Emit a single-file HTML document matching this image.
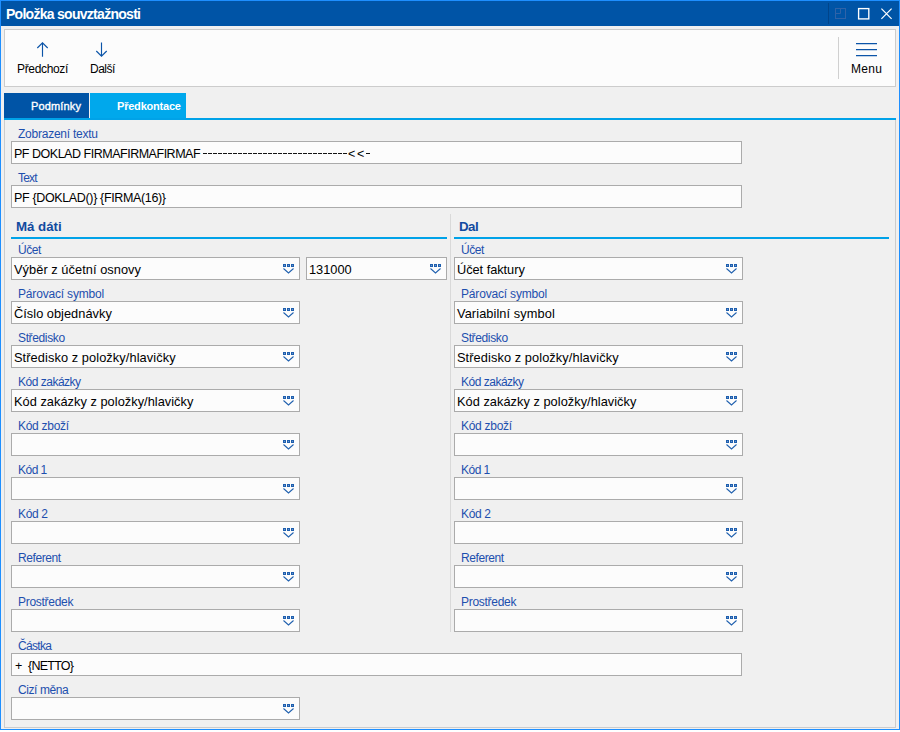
<!DOCTYPE html>
<html><head><meta charset="utf-8"><style>
html,body{margin:0;padding:0;background:#fff;width:900px;height:732px;overflow:hidden;}
body{position:relative;font-family:"Liberation Sans", sans-serif;}
.t{position:absolute;white-space:pre;}
</style></head><body>
<div style="position:absolute;left:0px;top:0px;width:898px;height:728px;border:1px solid #1e8fff;background:#f0f0f0"></div>
<div style="position:absolute;left:1px;top:1px;width:898px;height:25px;background:#0054a6"></div>
<div class="t" style="left:6px;top:7px;font-size:14px;line-height:14px;font-weight:bold;color:#fff;letter-spacing:-0.719px;">Položka souvztažnosti</div>
<div style="position:absolute;left:828px;top:3px;width:1px;height:21px;background:#00448a"></div>
<div style="position:absolute;left:4px;top:29px;width:890px;height:56px;border:1px solid #cccccc;background:#fcfcfc"></div>
<div style="position:absolute;left:4px;top:93px;width:85px;height:25px;background:#0054a6"></div>
<div style="position:absolute;left:90px;top:93px;width:96px;height:25px;background:#00a8ec"></div>
<div style="position:absolute;left:4px;top:118px;width:892px;height:2px;background:#00a2e8"></div>
<div class="t" style="left:31px;top:101px;font-size:11px;line-height:11px;font-weight:normal;color:#fff;letter-spacing:0.158px;-webkit-text-stroke:0.35px #fff;">Podmínky</div>
<div class="t" style="left:117px;top:101px;font-size:11px;line-height:11px;font-weight:bold;color:#fff;letter-spacing:-0.206px;">Předkontace</div>
<div style="position:absolute;left:4px;top:120px;width:890px;height:607px;border:1px solid #cccccc;border-top:none;background:#f0f0f0"></div>
<div class="t" style="left:18px;top:128px;font-size:12px;line-height:12px;font-weight:normal;color:#1d4fae;letter-spacing:-0.243px;">Zobrazení textu</div>
<div style="position:absolute;left:11px;top:141px;width:729px;height:21px;border:1px solid #ababab;background:#fcfcfc"></div>
<div class="t" style="left:14px;top:148px;font-size:12.5px;line-height:12.5px;font-weight:normal;color:#000;letter-spacing:-0.481px;">PF DOKLAD FIRMAFIRMAFIRMAF</div>
<div style="position:absolute;left:203px;top:153px;width:144px;height:1px;background:repeating-linear-gradient(to right,#111 0 4px,transparent 4px 5px)"></div>
<div class="t" style="left:348px;top:148px;font-size:12.5px;line-height:12.5px;font-weight:normal;color:#000;">&lt;</div>
<div class="t" style="left:357px;top:148px;font-size:12.5px;line-height:12.5px;font-weight:normal;color:#000;">&lt;</div>
<div style="position:absolute;left:366px;top:153px;width:4px;height:1px;background:#111"></div>
<div class="t" style="left:18px;top:172px;font-size:12px;line-height:12px;font-weight:normal;color:#1d4fae;letter-spacing:-0.840px;">Text</div>
<div style="position:absolute;left:11px;top:185px;width:729px;height:21px;border:1px solid #ababab;background:#fcfcfc"></div>
<div class="t" style="left:14px;top:192px;font-size:12.5px;line-height:12.5px;font-weight:normal;color:#000;letter-spacing:-0.352px;">PF {DOKLAD()} {FIRMA(16)}</div>
<div class="t" style="left:16px;top:220px;font-size:13.3px;line-height:13.3px;font-weight:bold;color:#124a9f;letter-spacing:-0.020px;">Má dáti</div>
<div style="position:absolute;left:11px;top:237px;width:436px;height:2px;background:#00a2e8"></div>
<div class="t" style="left:459px;top:220px;font-size:13.3px;line-height:13.3px;font-weight:bold;color:#124a9f;letter-spacing:-0.491px;">Dal</div>
<div style="position:absolute;left:454px;top:237px;width:435px;height:2px;background:#00a2e8"></div>
<div style="position:absolute;left:450px;top:214px;width:1px;height:418px;background:#d9d9d9"></div>
<div class="t" style="left:18px;top:244px;font-size:12px;line-height:12px;font-weight:normal;color:#1d4fae;letter-spacing:-0.453px;">Účet</div>
<div style="position:absolute;left:11px;top:257px;width:287px;height:21px;border:1px solid #ababab;background:#fcfcfc"></div>
<div class="t" style="left:14px;top:264px;font-size:12.8px;line-height:12.8px;font-weight:normal;color:#000;letter-spacing:0.052px;">Výběr z účetní osnovy</div>
<svg style="position:absolute;left:283px;top:264px" width="11" height="10" viewBox="0 0 11 10"><rect x="0.5" y="0.5" width="2" height="2" fill="#6a95d0" stroke="#1e5fae"/><rect x="4.5" y="0.5" width="2" height="2" fill="#6a95d0" stroke="#1e5fae"/><rect x="8.5" y="0.5" width="2" height="2" fill="#6a95d0" stroke="#1e5fae"/><path d="M0.5 4.5 L5.5 9 L10.5 4.5" fill="none" stroke="#1e5fae" stroke-width="1.05"/></svg>
<div style="position:absolute;left:306px;top:257px;width:139px;height:21px;border:1px solid #ababab;background:#fcfcfc"></div>
<div class="t" style="left:309px;top:264px;font-size:12.8px;line-height:12.8px;font-weight:normal;color:#000;">131000</div>
<svg style="position:absolute;left:430px;top:264px" width="11" height="10" viewBox="0 0 11 10"><rect x="0.5" y="0.5" width="2" height="2" fill="#6a95d0" stroke="#1e5fae"/><rect x="4.5" y="0.5" width="2" height="2" fill="#6a95d0" stroke="#1e5fae"/><rect x="8.5" y="0.5" width="2" height="2" fill="#6a95d0" stroke="#1e5fae"/><path d="M0.5 4.5 L5.5 9 L10.5 4.5" fill="none" stroke="#1e5fae" stroke-width="1.05"/></svg>
<div class="t" style="left:461px;top:244px;font-size:12px;line-height:12px;font-weight:normal;color:#1d4fae;letter-spacing:-0.453px;">Účet</div>
<div style="position:absolute;left:454px;top:257px;width:287px;height:21px;border:1px solid #ababab;background:#fcfcfc"></div>
<div class="t" style="left:457px;top:264px;font-size:12.8px;line-height:12.8px;font-weight:normal;color:#000;letter-spacing:-0.044px;">Účet faktury</div>
<svg style="position:absolute;left:726px;top:264px" width="11" height="10" viewBox="0 0 11 10"><rect x="0.5" y="0.5" width="2" height="2" fill="#6a95d0" stroke="#1e5fae"/><rect x="4.5" y="0.5" width="2" height="2" fill="#6a95d0" stroke="#1e5fae"/><rect x="8.5" y="0.5" width="2" height="2" fill="#6a95d0" stroke="#1e5fae"/><path d="M0.5 4.5 L5.5 9 L10.5 4.5" fill="none" stroke="#1e5fae" stroke-width="1.05"/></svg>
<div class="t" style="left:18px;top:288px;font-size:12px;line-height:12px;font-weight:normal;color:#1d4fae;letter-spacing:-0.177px;">Párovací symbol</div>
<div style="position:absolute;left:11px;top:301px;width:287px;height:21px;border:1px solid #ababab;background:#fcfcfc"></div>
<div class="t" style="left:14px;top:308px;font-size:12.8px;line-height:12.8px;font-weight:normal;color:#000;letter-spacing:0.022px;">Číslo objednávky</div>
<svg style="position:absolute;left:283px;top:308px" width="11" height="10" viewBox="0 0 11 10"><rect x="0.5" y="0.5" width="2" height="2" fill="#6a95d0" stroke="#1e5fae"/><rect x="4.5" y="0.5" width="2" height="2" fill="#6a95d0" stroke="#1e5fae"/><rect x="8.5" y="0.5" width="2" height="2" fill="#6a95d0" stroke="#1e5fae"/><path d="M0.5 4.5 L5.5 9 L10.5 4.5" fill="none" stroke="#1e5fae" stroke-width="1.05"/></svg>
<div class="t" style="left:461px;top:288px;font-size:12px;line-height:12px;font-weight:normal;color:#1d4fae;letter-spacing:-0.177px;">Párovací symbol</div>
<div style="position:absolute;left:454px;top:301px;width:287px;height:21px;border:1px solid #ababab;background:#fcfcfc"></div>
<div class="t" style="left:457px;top:308px;font-size:12.8px;line-height:12.8px;font-weight:normal;color:#000;letter-spacing:0.080px;">Variabilní symbol</div>
<svg style="position:absolute;left:726px;top:308px" width="11" height="10" viewBox="0 0 11 10"><rect x="0.5" y="0.5" width="2" height="2" fill="#6a95d0" stroke="#1e5fae"/><rect x="4.5" y="0.5" width="2" height="2" fill="#6a95d0" stroke="#1e5fae"/><rect x="8.5" y="0.5" width="2" height="2" fill="#6a95d0" stroke="#1e5fae"/><path d="M0.5 4.5 L5.5 9 L10.5 4.5" fill="none" stroke="#1e5fae" stroke-width="1.05"/></svg>
<div class="t" style="left:18px;top:332px;font-size:12px;line-height:12px;font-weight:normal;color:#1d4fae;letter-spacing:-0.367px;">Středisko</div>
<div style="position:absolute;left:11px;top:345px;width:287px;height:21px;border:1px solid #ababab;background:#fcfcfc"></div>
<div class="t" style="left:14px;top:352px;font-size:12.8px;line-height:12.8px;font-weight:normal;color:#000;letter-spacing:0.083px;">Středisko z položky/hlavičky</div>
<svg style="position:absolute;left:283px;top:352px" width="11" height="10" viewBox="0 0 11 10"><rect x="0.5" y="0.5" width="2" height="2" fill="#6a95d0" stroke="#1e5fae"/><rect x="4.5" y="0.5" width="2" height="2" fill="#6a95d0" stroke="#1e5fae"/><rect x="8.5" y="0.5" width="2" height="2" fill="#6a95d0" stroke="#1e5fae"/><path d="M0.5 4.5 L5.5 9 L10.5 4.5" fill="none" stroke="#1e5fae" stroke-width="1.05"/></svg>
<div class="t" style="left:461px;top:332px;font-size:12px;line-height:12px;font-weight:normal;color:#1d4fae;letter-spacing:-0.367px;">Středisko</div>
<div style="position:absolute;left:454px;top:345px;width:287px;height:21px;border:1px solid #ababab;background:#fcfcfc"></div>
<div class="t" style="left:457px;top:352px;font-size:12.8px;line-height:12.8px;font-weight:normal;color:#000;letter-spacing:0.083px;">Středisko z položky/hlavičky</div>
<svg style="position:absolute;left:726px;top:352px" width="11" height="10" viewBox="0 0 11 10"><rect x="0.5" y="0.5" width="2" height="2" fill="#6a95d0" stroke="#1e5fae"/><rect x="4.5" y="0.5" width="2" height="2" fill="#6a95d0" stroke="#1e5fae"/><rect x="8.5" y="0.5" width="2" height="2" fill="#6a95d0" stroke="#1e5fae"/><path d="M0.5 4.5 L5.5 9 L10.5 4.5" fill="none" stroke="#1e5fae" stroke-width="1.05"/></svg>
<div class="t" style="left:18px;top:376px;font-size:12px;line-height:12px;font-weight:normal;color:#1d4fae;letter-spacing:-0.494px;">Kód zakázky</div>
<div style="position:absolute;left:11px;top:389px;width:287px;height:21px;border:1px solid #ababab;background:#fcfcfc"></div>
<div class="t" style="left:14px;top:396px;font-size:12.8px;line-height:12.8px;font-weight:normal;color:#000;letter-spacing:0.029px;">Kód zakázky z položky/hlavičky</div>
<svg style="position:absolute;left:283px;top:396px" width="11" height="10" viewBox="0 0 11 10"><rect x="0.5" y="0.5" width="2" height="2" fill="#6a95d0" stroke="#1e5fae"/><rect x="4.5" y="0.5" width="2" height="2" fill="#6a95d0" stroke="#1e5fae"/><rect x="8.5" y="0.5" width="2" height="2" fill="#6a95d0" stroke="#1e5fae"/><path d="M0.5 4.5 L5.5 9 L10.5 4.5" fill="none" stroke="#1e5fae" stroke-width="1.05"/></svg>
<div class="t" style="left:461px;top:376px;font-size:12px;line-height:12px;font-weight:normal;color:#1d4fae;letter-spacing:-0.494px;">Kód zakázky</div>
<div style="position:absolute;left:454px;top:389px;width:287px;height:21px;border:1px solid #ababab;background:#fcfcfc"></div>
<div class="t" style="left:457px;top:396px;font-size:12.8px;line-height:12.8px;font-weight:normal;color:#000;letter-spacing:0.029px;">Kód zakázky z položky/hlavičky</div>
<svg style="position:absolute;left:726px;top:396px" width="11" height="10" viewBox="0 0 11 10"><rect x="0.5" y="0.5" width="2" height="2" fill="#6a95d0" stroke="#1e5fae"/><rect x="4.5" y="0.5" width="2" height="2" fill="#6a95d0" stroke="#1e5fae"/><rect x="8.5" y="0.5" width="2" height="2" fill="#6a95d0" stroke="#1e5fae"/><path d="M0.5 4.5 L5.5 9 L10.5 4.5" fill="none" stroke="#1e5fae" stroke-width="1.05"/></svg>
<div class="t" style="left:18px;top:420px;font-size:12px;line-height:12px;font-weight:normal;color:#1d4fae;letter-spacing:-0.280px;">Kód zboží</div>
<div style="position:absolute;left:11px;top:433px;width:287px;height:21px;border:1px solid #ababab;background:#fcfcfc"></div>
<svg style="position:absolute;left:283px;top:440px" width="11" height="10" viewBox="0 0 11 10"><rect x="0.5" y="0.5" width="2" height="2" fill="#6a95d0" stroke="#1e5fae"/><rect x="4.5" y="0.5" width="2" height="2" fill="#6a95d0" stroke="#1e5fae"/><rect x="8.5" y="0.5" width="2" height="2" fill="#6a95d0" stroke="#1e5fae"/><path d="M0.5 4.5 L5.5 9 L10.5 4.5" fill="none" stroke="#1e5fae" stroke-width="1.05"/></svg>
<div class="t" style="left:461px;top:420px;font-size:12px;line-height:12px;font-weight:normal;color:#1d4fae;letter-spacing:-0.280px;">Kód zboží</div>
<div style="position:absolute;left:454px;top:433px;width:287px;height:21px;border:1px solid #ababab;background:#fcfcfc"></div>
<svg style="position:absolute;left:726px;top:440px" width="11" height="10" viewBox="0 0 11 10"><rect x="0.5" y="0.5" width="2" height="2" fill="#6a95d0" stroke="#1e5fae"/><rect x="4.5" y="0.5" width="2" height="2" fill="#6a95d0" stroke="#1e5fae"/><rect x="8.5" y="0.5" width="2" height="2" fill="#6a95d0" stroke="#1e5fae"/><path d="M0.5 4.5 L5.5 9 L10.5 4.5" fill="none" stroke="#1e5fae" stroke-width="1.05"/></svg>
<div class="t" style="left:18px;top:464px;font-size:12px;line-height:12px;font-weight:normal;color:#1d4fae;letter-spacing:-0.520px;">Kód 1</div>
<div style="position:absolute;left:11px;top:477px;width:287px;height:21px;border:1px solid #ababab;background:#fcfcfc"></div>
<svg style="position:absolute;left:283px;top:484px" width="11" height="10" viewBox="0 0 11 10"><rect x="0.5" y="0.5" width="2" height="2" fill="#6a95d0" stroke="#1e5fae"/><rect x="4.5" y="0.5" width="2" height="2" fill="#6a95d0" stroke="#1e5fae"/><rect x="8.5" y="0.5" width="2" height="2" fill="#6a95d0" stroke="#1e5fae"/><path d="M0.5 4.5 L5.5 9 L10.5 4.5" fill="none" stroke="#1e5fae" stroke-width="1.05"/></svg>
<div class="t" style="left:461px;top:464px;font-size:12px;line-height:12px;font-weight:normal;color:#1d4fae;letter-spacing:-0.520px;">Kód 1</div>
<div style="position:absolute;left:454px;top:477px;width:287px;height:21px;border:1px solid #ababab;background:#fcfcfc"></div>
<svg style="position:absolute;left:726px;top:484px" width="11" height="10" viewBox="0 0 11 10"><rect x="0.5" y="0.5" width="2" height="2" fill="#6a95d0" stroke="#1e5fae"/><rect x="4.5" y="0.5" width="2" height="2" fill="#6a95d0" stroke="#1e5fae"/><rect x="8.5" y="0.5" width="2" height="2" fill="#6a95d0" stroke="#1e5fae"/><path d="M0.5 4.5 L5.5 9 L10.5 4.5" fill="none" stroke="#1e5fae" stroke-width="1.05"/></svg>
<div class="t" style="left:18px;top:508px;font-size:12px;line-height:12px;font-weight:normal;color:#1d4fae;letter-spacing:-0.345px;">Kód 2</div>
<div style="position:absolute;left:11px;top:521px;width:287px;height:21px;border:1px solid #ababab;background:#fcfcfc"></div>
<svg style="position:absolute;left:283px;top:528px" width="11" height="10" viewBox="0 0 11 10"><rect x="0.5" y="0.5" width="2" height="2" fill="#6a95d0" stroke="#1e5fae"/><rect x="4.5" y="0.5" width="2" height="2" fill="#6a95d0" stroke="#1e5fae"/><rect x="8.5" y="0.5" width="2" height="2" fill="#6a95d0" stroke="#1e5fae"/><path d="M0.5 4.5 L5.5 9 L10.5 4.5" fill="none" stroke="#1e5fae" stroke-width="1.05"/></svg>
<div class="t" style="left:461px;top:508px;font-size:12px;line-height:12px;font-weight:normal;color:#1d4fae;letter-spacing:-0.345px;">Kód 2</div>
<div style="position:absolute;left:454px;top:521px;width:287px;height:21px;border:1px solid #ababab;background:#fcfcfc"></div>
<svg style="position:absolute;left:726px;top:528px" width="11" height="10" viewBox="0 0 11 10"><rect x="0.5" y="0.5" width="2" height="2" fill="#6a95d0" stroke="#1e5fae"/><rect x="4.5" y="0.5" width="2" height="2" fill="#6a95d0" stroke="#1e5fae"/><rect x="8.5" y="0.5" width="2" height="2" fill="#6a95d0" stroke="#1e5fae"/><path d="M0.5 4.5 L5.5 9 L10.5 4.5" fill="none" stroke="#1e5fae" stroke-width="1.05"/></svg>
<div class="t" style="left:18px;top:552px;font-size:12px;line-height:12px;font-weight:normal;color:#1d4fae;letter-spacing:-0.403px;">Referent</div>
<div style="position:absolute;left:11px;top:565px;width:287px;height:21px;border:1px solid #ababab;background:#fcfcfc"></div>
<svg style="position:absolute;left:283px;top:572px" width="11" height="10" viewBox="0 0 11 10"><rect x="0.5" y="0.5" width="2" height="2" fill="#6a95d0" stroke="#1e5fae"/><rect x="4.5" y="0.5" width="2" height="2" fill="#6a95d0" stroke="#1e5fae"/><rect x="8.5" y="0.5" width="2" height="2" fill="#6a95d0" stroke="#1e5fae"/><path d="M0.5 4.5 L5.5 9 L10.5 4.5" fill="none" stroke="#1e5fae" stroke-width="1.05"/></svg>
<div class="t" style="left:461px;top:552px;font-size:12px;line-height:12px;font-weight:normal;color:#1d4fae;letter-spacing:-0.403px;">Referent</div>
<div style="position:absolute;left:454px;top:565px;width:287px;height:21px;border:1px solid #ababab;background:#fcfcfc"></div>
<svg style="position:absolute;left:726px;top:572px" width="11" height="10" viewBox="0 0 11 10"><rect x="0.5" y="0.5" width="2" height="2" fill="#6a95d0" stroke="#1e5fae"/><rect x="4.5" y="0.5" width="2" height="2" fill="#6a95d0" stroke="#1e5fae"/><rect x="8.5" y="0.5" width="2" height="2" fill="#6a95d0" stroke="#1e5fae"/><path d="M0.5 4.5 L5.5 9 L10.5 4.5" fill="none" stroke="#1e5fae" stroke-width="1.05"/></svg>
<div class="t" style="left:18px;top:596px;font-size:12px;line-height:12px;font-weight:normal;color:#1d4fae;letter-spacing:-0.287px;">Prostředek</div>
<div style="position:absolute;left:11px;top:609px;width:287px;height:21px;border:1px solid #ababab;background:#fcfcfc"></div>
<svg style="position:absolute;left:283px;top:616px" width="11" height="10" viewBox="0 0 11 10"><rect x="0.5" y="0.5" width="2" height="2" fill="#6a95d0" stroke="#1e5fae"/><rect x="4.5" y="0.5" width="2" height="2" fill="#6a95d0" stroke="#1e5fae"/><rect x="8.5" y="0.5" width="2" height="2" fill="#6a95d0" stroke="#1e5fae"/><path d="M0.5 4.5 L5.5 9 L10.5 4.5" fill="none" stroke="#1e5fae" stroke-width="1.05"/></svg>
<div class="t" style="left:461px;top:596px;font-size:12px;line-height:12px;font-weight:normal;color:#1d4fae;letter-spacing:-0.287px;">Prostředek</div>
<div style="position:absolute;left:454px;top:609px;width:287px;height:21px;border:1px solid #ababab;background:#fcfcfc"></div>
<svg style="position:absolute;left:726px;top:616px" width="11" height="10" viewBox="0 0 11 10"><rect x="0.5" y="0.5" width="2" height="2" fill="#6a95d0" stroke="#1e5fae"/><rect x="4.5" y="0.5" width="2" height="2" fill="#6a95d0" stroke="#1e5fae"/><rect x="8.5" y="0.5" width="2" height="2" fill="#6a95d0" stroke="#1e5fae"/><path d="M0.5 4.5 L5.5 9 L10.5 4.5" fill="none" stroke="#1e5fae" stroke-width="1.05"/></svg>
<div class="t" style="left:18px;top:640px;font-size:12px;line-height:12px;font-weight:normal;color:#1d4fae;letter-spacing:-0.676px;">Částka</div>
<div style="position:absolute;left:11px;top:653px;width:729px;height:21px;border:1px solid #ababab;background:#fcfcfc"></div>
<div class="t" style="left:15px;top:660px;font-size:12.5px;line-height:12.5px;font-weight:normal;color:#000;">+</div>
<div class="t" style="left:28px;top:660px;font-size:12.5px;line-height:12.5px;font-weight:normal;color:#000;letter-spacing:-0.750px;">{NETTO}</div>
<div class="t" style="left:18px;top:684px;font-size:12px;line-height:12px;font-weight:normal;color:#1d4fae;letter-spacing:-0.408px;">Cizí měna</div>
<div style="position:absolute;left:11px;top:697px;width:287px;height:21px;border:1px solid #ababab;background:#fcfcfc"></div>
<svg style="position:absolute;left:283px;top:704px" width="11" height="10" viewBox="0 0 11 10"><rect x="0.5" y="0.5" width="2" height="2" fill="#6a95d0" stroke="#1e5fae"/><rect x="4.5" y="0.5" width="2" height="2" fill="#6a95d0" stroke="#1e5fae"/><rect x="8.5" y="0.5" width="2" height="2" fill="#6a95d0" stroke="#1e5fae"/><path d="M0.5 4.5 L5.5 9 L10.5 4.5" fill="none" stroke="#1e5fae" stroke-width="1.05"/></svg>
<svg style="position:absolute;left:30px;top:38px" width="26" height="22" viewBox="30 38 26 22"><path d="M42.5 42.8 V56.8 M37.3 48 L42.5 42.8 L47.7 48" fill="none" stroke="#0b54a8" stroke-width="1.15"/></svg>
<svg style="position:absolute;left:89px;top:38px" width="26" height="22" viewBox="89 38 26 22"><path d="M101.5 42.5 V56.2 M96.3 51 L101.5 56.2 L106.7 51" fill="none" stroke="#0b54a8" stroke-width="1.15"/></svg>
<div class="t" style="left:17px;top:63px;font-size:12px;line-height:12px;font-weight:normal;color:#000;letter-spacing:-0.333px;">Předchozí</div>
<div class="t" style="left:90px;top:63px;font-size:12px;line-height:12px;font-weight:normal;color:#000;letter-spacing:-0.515px;">Další</div>
<div style="position:absolute;left:838px;top:37px;width:1px;height:42px;background:#d0d0d0"></div>
<div style="position:absolute;left:856px;top:43px;width:21px;height:1px;background:#0b54a8"></div>
<div style="position:absolute;left:856px;top:44px;width:21px;height:1px;background:rgba(11,84,168,0.25)"></div>
<div style="position:absolute;left:856px;top:49px;width:21px;height:1px;background:#0b54a8"></div>
<div style="position:absolute;left:856px;top:50px;width:21px;height:1px;background:rgba(11,84,168,0.25)"></div>
<div style="position:absolute;left:856px;top:55px;width:21px;height:1px;background:#0b54a8"></div>
<div style="position:absolute;left:856px;top:56px;width:21px;height:1px;background:rgba(11,84,168,0.25)"></div>
<div class="t" style="left:851px;top:63px;font-size:12px;line-height:12px;font-weight:normal;color:#000;letter-spacing:0.267px;">Menu</div>
<svg style="position:absolute;left:834px;top:7px" width="60" height="14" viewBox="0 0 60 14"><rect x="1.5" y="1.5" width="10" height="10" fill="none" stroke="#2f63a8" stroke-width="1"/><path d="M6.5 1.5 V6.5 H1.5" fill="none" stroke="#2f63a8" stroke-width="1"/><rect x="24.6" y="1.6" width="10.2" height="10.3" fill="none" stroke="#fff" stroke-width="1.35"/><path d="M47.4 1.6 L57.6 11.8 M57.6 1.6 L47.4 11.8" fill="none" stroke="#fff" stroke-width="1.2"/></svg>
</body></html>
